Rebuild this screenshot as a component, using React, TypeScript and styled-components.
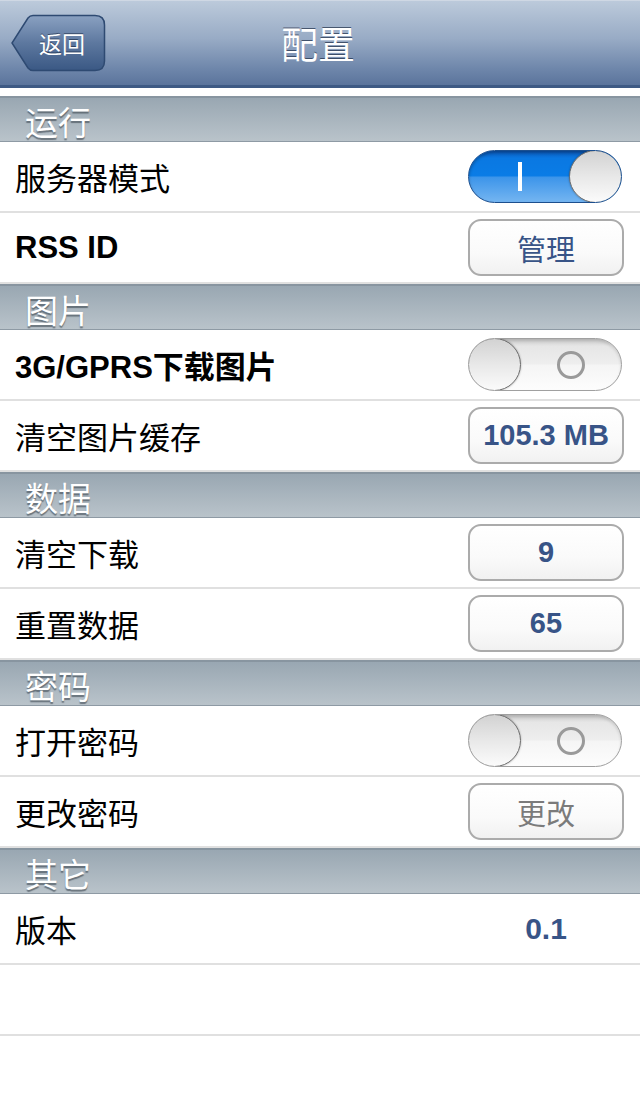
import React from 'react';
import styled, { createGlobalStyle } from 'styled-components';

const GlobalStyle = createGlobalStyle`
  html, body { margin: 0; padding: 0; background: #fff; }
  body { font-family: "Liberation Sans", "Noto Sans CJK SC", sans-serif; }
  * { box-sizing: border-box; }
`;

const Screen = styled.div`
  width: 640px;
  height: 1096px;
  overflow: hidden;
  background: #fff;
  display: flex;
  flex-direction: column;
`;

const NavBar = styled.header`
  height: 88px;
  flex-shrink: 0;
  border-top: 1px solid #cfd8e4;
  border-bottom: 3px solid #3e5a84;
  background: linear-gradient(180deg, #bccadb 0%, #98abc5 45%, #6f87ab 80%, #5b749c 100%);
  display: grid;
  grid-template-columns: 1fr auto 1fr;
  align-items: center;
  padding: 0 10px;
`;

const BackButton = styled.button`
  position: relative;
  width: 96px;
  height: 58px;
  border: none;
  background: none;
  padding: 0 0 0 8px;
  display: flex;
  align-items: center;
  justify-content: center;
  font-family: "Liberation Sans", "Noto Sans CJK SC", sans-serif;
  font-size: 23px;
  color: #fff;
  text-shadow: 0 -1px 0 rgba(20, 35, 60, 0.6);
  justify-self: start;
`;

const BackShape = styled.svg`
  position: absolute;
  inset: 0;
  z-index: 0;
`;

const BackLabel = styled.span`
  position: relative;
  z-index: 1;
`;

const Title = styled.h1`
  margin: 0;
  font-size: 37px;
  font-weight: normal;
  color: #fff;
  text-shadow: 0 -1px 0 rgba(30, 45, 70, 0.7);
  transform: translateX(-2px);
`;

const Content = styled.main`
  display: flex;
  flex-direction: column;
  padding-top: 8px;
`;

const SectionHeader = styled.div`
  height: 46px;
  flex-shrink: 0;
  border-top: 2px solid #8895a0;
  border-bottom: 1px solid #8e9aa4;
  background: linear-gradient(180deg, #99a7b2 0%, #a9b5be 50%, #b9c3ca 100%);
  display: flex;
  align-items: center;
  padding: 2px 0 0 25px;
  font-size: 33px;
  color: #fff;
  text-shadow: 0 2px 1px rgba(55, 65, 75, 0.6);
`;

const Row = styled.div`
  height: 71px;
  flex-shrink: 0;
  border-bottom: 2px solid #e0e0e0;
  display: flex;
  align-items: center;
  justify-content: space-between;
  padding: 0 16px 0 15px;
`;

const Label = styled.span<{ $bold?: boolean }>`
  font-size: 31px;
  color: #000;
  font-weight: ${p => (p.$bold ? 'bold' : 'normal')};
`;

const SwitchTrack = styled.div<{ $on: boolean }>`
  width: 154px;
  height: 53px;
  margin-right: 2px;
  border-radius: 27px;
  overflow: hidden;
  display: flex;
  flex-direction: ${p => (p.$on ? 'row' : 'row-reverse')};
  align-items: center;
  border: 1px solid ${p => (p.$on ? '#1c4f8e' : '#a0a0a0')};
  background: ${p =>
    p.$on
      ? 'linear-gradient(180deg, #0b58b8 0%, #0a78e2 14%, #0a7ce6 48%, #3d95ea 52%, #74b5f1 100%)'
      : 'linear-gradient(180deg, #c9c9c9 0%, #e6e6e6 14%, #eeeeee 48%, #f5f5f5 52%, #fdfdfd 100%)'};
  box-shadow: inset 0 2px 3px rgba(0, 0, 0, ${p => (p.$on ? 0.25 : 0.12)});
`;

const SwitchMarkArea = styled.div`
  flex: 1;
  display: flex;
  align-items: center;
  justify-content: center;
`;

const OnMark = styled.span`
  width: 4px;
  height: 29px;
  background: #fff;
`;

const OffMark = styled.span`
  width: 28px;
  height: 28px;
  border-radius: 50%;
  border: 3px solid #9a9a9a;
`;

const Knob = styled.div`
  width: 53px;
  height: 53px;
  margin: -1px;
  flex-shrink: 0;
  border-radius: 50%;
  border: 1px solid #6a6a6a;
  background: linear-gradient(180deg, #d2d2d2 0%, #e8e8e8 50%, #fbfbfb 100%);
  box-shadow: 0 0 2px rgba(0, 0, 0, 0.35);
`;

const RoundButton = styled.button<{ $bold?: boolean; $muted?: boolean }>`
  width: 156px;
  height: 57px;
  border: 2px solid #ababab;
  border-radius: 13px;
  background: linear-gradient(180deg, #ffffff 0%, #fafafa 60%, #f1f1f1 100%);
  font-family: "Liberation Sans", "Noto Sans CJK SC", sans-serif;
  font-size: 29px;
  font-weight: ${p => (p.$bold ? 'bold' : 'normal')};
  color: ${p => (p.$muted ? '#7b7b7b' : '#385487')};
  padding: 0;
  display: flex;
  align-items: center;
  justify-content: center;
`;

const ValueText = styled.span`
  width: 156px;
  text-align: center;
  font-size: 30px;
  font-weight: bold;
  color: #385487;
`;

const Switch: React.FC<{ on: boolean }> = ({ on }) => (
  <SwitchTrack $on={on}>
    <SwitchMarkArea>{on ? <OnMark /> : <OffMark />}</SwitchMarkArea>
    <Knob />
  </SwitchTrack>
);

export default function App() {
  return (
    <Screen>
      <GlobalStyle />
      <NavBar>
        <BackButton>
          <BackShape width="96" height="58" viewBox="0 0 96 58">
            <defs>
              <linearGradient id="backGrad" x1="0" y1="0" x2="0" y2="1">
                <stop offset="0" stopColor="#8aa1c1" />
                <stop offset="0.5" stopColor="#5d789f" />
                <stop offset="1" stopColor="#3a5884" />
              </linearGradient>
            </defs>
            <path
              d="M23 1.5 L85 1.5 Q94.5 1.5 94.5 11 L94.5 47 Q94.5 56.5 85 56.5 L23 56.5 Q20 56.5 18 54 L2 29 L18 4 Q20 1.5 23 1.5 Z"
              fill="url(#backGrad)"
              stroke="#2e4a72"
              strokeWidth="1.5"
            />
          </BackShape>
          <BackLabel>返回</BackLabel>
        </BackButton>
        <Title>配置</Title>
        <span />
      </NavBar>
      <Content>
        <SectionHeader>运行</SectionHeader>
        <Row>
          <Label>服务器模式</Label>
          <Switch on />
        </Row>
        <Row>
          <Label $bold>RSS ID</Label>
          <RoundButton>管理</RoundButton>
        </Row>
        <SectionHeader>图片</SectionHeader>
        <Row>
          <Label $bold>3G/GPRS下载图片</Label>
          <Switch on={false} />
        </Row>
        <Row>
          <Label>清空图片缓存</Label>
          <RoundButton $bold>105.3 MB</RoundButton>
        </Row>
        <SectionHeader>数据</SectionHeader>
        <Row>
          <Label>清空下载</Label>
          <RoundButton $bold>9</RoundButton>
        </Row>
        <Row>
          <Label>重置数据</Label>
          <RoundButton $bold>65</RoundButton>
        </Row>
        <SectionHeader>密码</SectionHeader>
        <Row>
          <Label>打开密码</Label>
          <Switch on={false} />
        </Row>
        <Row>
          <Label>更改密码</Label>
          <RoundButton $muted>更改</RoundButton>
        </Row>
        <SectionHeader>其它</SectionHeader>
        <Row>
          <Label>版本</Label>
          <ValueText>0.1</ValueText>
        </Row>
        <Row />
        <Row />
      </Content>
    </Screen>
  );
}
